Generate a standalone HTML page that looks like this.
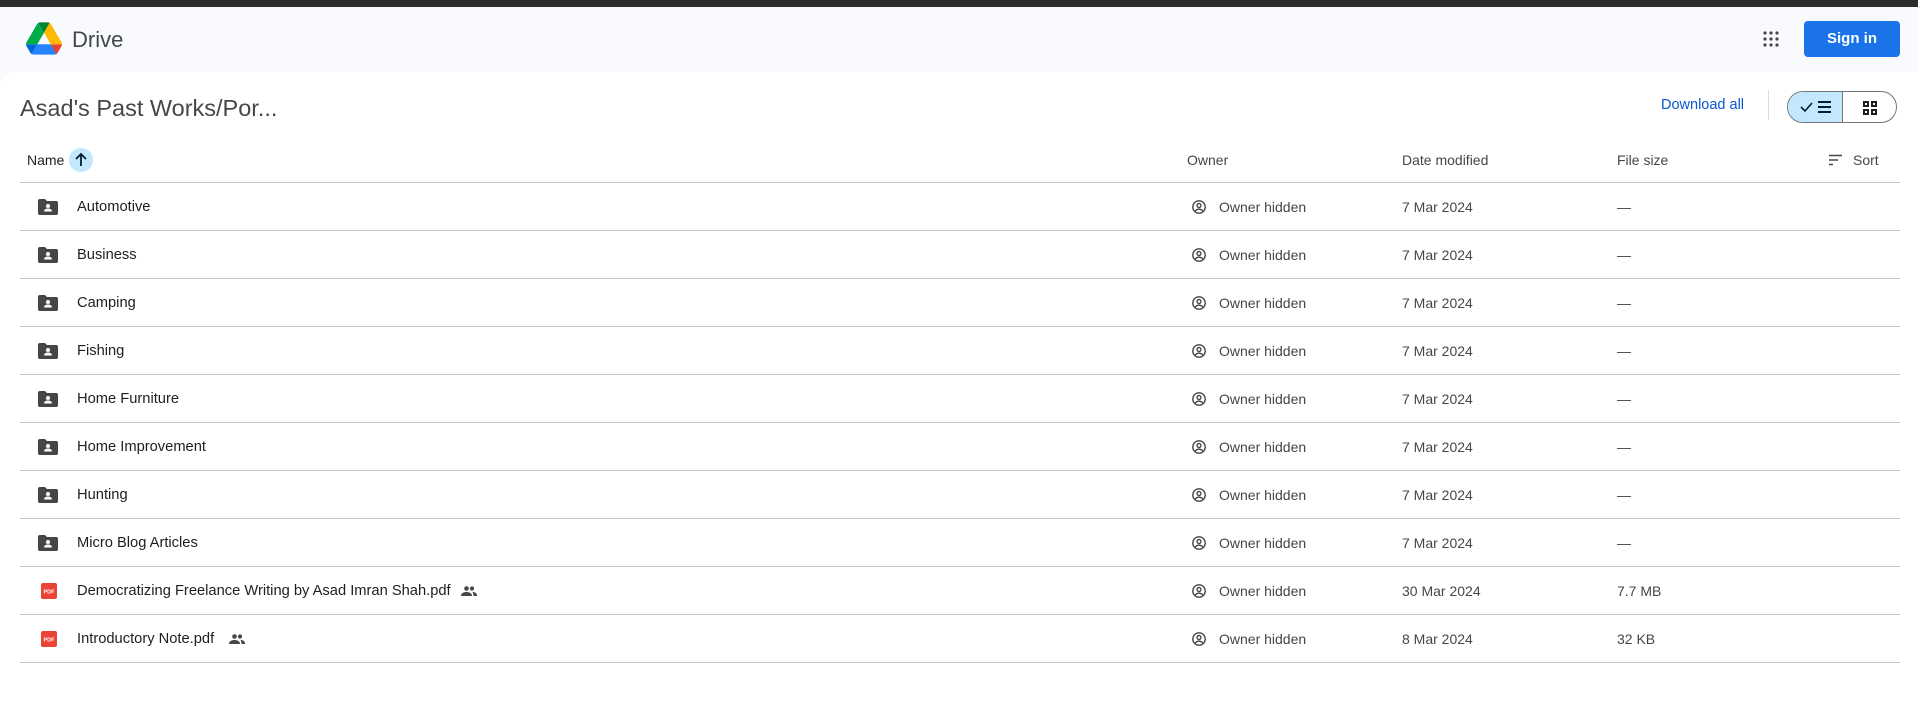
<!DOCTYPE html>
<html><head><meta charset="utf-8"><style>
*{margin:0;padding:0;box-sizing:border-box}
body{width:1918px;height:701px;overflow:hidden;background:#f8fafd;font-family:"Liberation Sans",Arial,sans-serif;color:#1f1f1f;position:relative}
.abs{position:absolute}
.top{left:0;top:0;width:1918px;height:7px;background:#2d2d2d}
.card{left:0;top:72px;width:1918px;height:629px;background:#fff;border-top-left-radius:16px}
.row{position:absolute;left:20px;width:1880px;height:48px;border-bottom:1px solid #c7c7c7;font-size:14px}
.row span{position:absolute;top:50%;transform:translateY(-50%);white-space:nowrap}
.n{left:57px;color:#1f1f1f;font-size:14.7px}
.o{left:1199px;color:#444746}
.d{left:1382px;color:#444746}
.s{left:1597px;color:#444746}
.oi{left:1172px}
.fi{left:18px}
</style></head><body>
<div class="abs top"></div>
<svg class="abs" style="left:26px;top:22px" width="36" height="33" viewBox="0 0 87.3 78"><path d="m6.6 66.85 3.85 6.65c.8 1.4 1.95 2.5 3.3 3.3l13.750-23.8h-27.5c0 1.55.4 3.1 1.2 4.5z" fill="#0066da"/><path d="m43.65 25-13.75-23.8c-1.35.8-2.5 1.9-3.3 3.3l-25.4 44a9.06 9.06 0 0 0 -1.2 4.5h27.5z" fill="#00ac47"/><path d="m73.55 76.8c1.35-.8 2.5-1.9 3.3-3.3l1.6-2.750 7.65-13.25c.8-1.4 1.2-2.95 1.2-4.5h-27.502l5.852 11.5z" fill="#ea4335"/><path d="m43.65 25 13.75-23.8c-1.35-.8-2.9-1.2-4.5-1.2h-18.5c-1.6 0-3.15.45-4.5 1.2z" fill="#00832d"/><path d="m59.8 53h-32.3l-13.75 23.8c1.35.8 2.9 1.2 4.5 1.2h50.8c1.6 0 3.15-.45 4.5-1.2z" fill="#2684fc"/><path d="m73.4 26.5-12.7-22c-.8-1.4-1.95-2.5-3.3-3.3l-13.75 23.8 16.15 28h27.45c0-1.55-.4-3.1-1.2-4.5z" fill="#ffba00"/></svg>
<div class="abs" style="left:72px;top:27px;font-size:22px;color:#444746">Drive</div>
<svg class="abs" style="left:1763px;top:31px" width="16" height="16" viewBox="0 0 16 16" fill="#444746"><circle cx="2" cy="2" r="1.6"/><circle cx="8" cy="2" r="1.6"/><circle cx="14" cy="2" r="1.6"/><circle cx="2" cy="8" r="1.6"/><circle cx="8" cy="8" r="1.6"/><circle cx="14" cy="8" r="1.6"/><circle cx="2" cy="14" r="1.6"/><circle cx="8" cy="14" r="1.6"/><circle cx="14" cy="14" r="1.6"/></svg>
<div class="abs" style="left:1804px;top:21px;width:96px;height:36px;background:#1a73e8;border-radius:4px;color:#fff;font-size:15px;font-weight:bold;text-align:center;line-height:36px">Sign in</div>
<div class="abs card"></div>
<div class="abs" style="left:20px;top:95px;font-size:23.5px;color:#444746">Asad's Past Works/Por...</div>
<div class="abs" style="left:1661px;top:97px;font-size:14.5px;color:#0b57d0">Download all</div>
<div class="abs" style="left:1768px;top:90px;width:1px;height:30px;background:#dadce0"></div>
<div class="abs" style="left:1787px;top:91px;width:110px;height:32px;border:1px solid #747775;border-radius:16px;overflow:hidden">
<div style="position:absolute;left:0;top:0;width:55px;height:30px;background:#c2e7ff;border-right:1px solid #747775"></div>
<svg style="position:absolute;left:12px;top:8px" width="34" height="14" viewBox="0 0 34 14"><path d="M1 7l4 4 7-8" stroke="#001d35" stroke-width="1.6" fill="none"/><path d="M18 2h13M18 7h13M18 12h13" stroke="#001d35" stroke-width="2"/></svg>
<svg style="position:absolute;left:75px;top:9px" width="14" height="14" viewBox="0 0 14 14" fill="none" stroke="#1f1f1f" stroke-width="2"><rect x="1" y="1" width="4" height="4"/><rect x="9" y="1" width="4" height="4"/><rect x="1" y="9" width="4" height="4"/><rect x="9" y="9" width="4" height="4"/></svg>
</div>
<div class="abs" style="left:27px;top:152px;font-size:14px;color:#1f1f1f">Name</div>
<div class="abs" style="left:69px;top:148px;width:24px;height:24px;border-radius:50%;background:#c2e7ff"></div>
<svg class="abs" style="left:73px;top:152px" width="16" height="16" viewBox="0 0 16 16"><path d="M8 14V2M3 7l5-5 5 5" stroke="#001d35" stroke-width="1.8" fill="none"/></svg>
<div class="abs" style="left:1187px;top:152px;font-size:14px;color:#444746">Owner</div>
<div class="abs" style="left:1402px;top:152px;font-size:14px;color:#444746">Date modified</div>
<div class="abs" style="left:1617px;top:152px;font-size:14px;color:#444746">File size</div>
<svg class="abs" style="left:1829px;top:154px" width="14" height="12" viewBox="0 0 14 12"><path d="M0 1.5h13M0 6h9M0 10.5h4" stroke="#444746" stroke-width="1.5"/></svg>
<div class="abs" style="left:1853px;top:152px;font-size:14px;color:#444746">Sort</div>
<div class="abs" style="left:20px;top:182px;width:1880px;height:1px;background:#c7c7c7"></div>
<div style="position:absolute;left:0;top:183px">
<div class="row" style="top:0"><svg class="abs fi" style="top:16px" width="20" height="16" viewBox="0 0 20 16"><path d="M0 2a2 2 0 0 1 2-2h5l2 2h9a2 2 0 0 1 2 2v10a2 2 0 0 1-2 2H2a2 2 0 0 1-2-2z" fill="#444746"/><circle cx="10" cy="7" r="2" fill="#fff"/><path d="M6 12.5c0-2 2-3 4-3s4 1 4 3z" fill="#fff"/></svg><span class="n">Automotive</span><svg class="abs oi" style="top:17px" width="14" height="14" viewBox="0 0 14 14" fill="none" stroke="#444746" stroke-width="1.4"><circle cx="7" cy="7" r="6.2"/><circle cx="7" cy="5.5" r="2"/><path d="M3.2 11c1-1.3 2.3-1.8 3.8-1.8s2.8.5 3.8 1.8"/></svg><span class="o">Owner hidden</span><span class="d">7 Mar 2024</span><span class="s">—</span></div>
<div class="row" style="top:48px"><svg class="abs fi" style="top:16px" width="20" height="16" viewBox="0 0 20 16"><path d="M0 2a2 2 0 0 1 2-2h5l2 2h9a2 2 0 0 1 2 2v10a2 2 0 0 1-2 2H2a2 2 0 0 1-2-2z" fill="#444746"/><circle cx="10" cy="7" r="2" fill="#fff"/><path d="M6 12.5c0-2 2-3 4-3s4 1 4 3z" fill="#fff"/></svg><span class="n">Business</span><svg class="abs oi" style="top:17px" width="14" height="14" viewBox="0 0 14 14" fill="none" stroke="#444746" stroke-width="1.4"><circle cx="7" cy="7" r="6.2"/><circle cx="7" cy="5.5" r="2"/><path d="M3.2 11c1-1.3 2.3-1.8 3.8-1.8s2.8.5 3.8 1.8"/></svg><span class="o">Owner hidden</span><span class="d">7 Mar 2024</span><span class="s">—</span></div>
<div class="row" style="top:96px"><svg class="abs fi" style="top:16px" width="20" height="16" viewBox="0 0 20 16"><path d="M0 2a2 2 0 0 1 2-2h5l2 2h9a2 2 0 0 1 2 2v10a2 2 0 0 1-2 2H2a2 2 0 0 1-2-2z" fill="#444746"/><circle cx="10" cy="7" r="2" fill="#fff"/><path d="M6 12.5c0-2 2-3 4-3s4 1 4 3z" fill="#fff"/></svg><span class="n">Camping</span><svg class="abs oi" style="top:17px" width="14" height="14" viewBox="0 0 14 14" fill="none" stroke="#444746" stroke-width="1.4"><circle cx="7" cy="7" r="6.2"/><circle cx="7" cy="5.5" r="2"/><path d="M3.2 11c1-1.3 2.3-1.8 3.8-1.8s2.8.5 3.8 1.8"/></svg><span class="o">Owner hidden</span><span class="d">7 Mar 2024</span><span class="s">—</span></div>
<div class="row" style="top:144px"><svg class="abs fi" style="top:16px" width="20" height="16" viewBox="0 0 20 16"><path d="M0 2a2 2 0 0 1 2-2h5l2 2h9a2 2 0 0 1 2 2v10a2 2 0 0 1-2 2H2a2 2 0 0 1-2-2z" fill="#444746"/><circle cx="10" cy="7" r="2" fill="#fff"/><path d="M6 12.5c0-2 2-3 4-3s4 1 4 3z" fill="#fff"/></svg><span class="n">Fishing</span><svg class="abs oi" style="top:17px" width="14" height="14" viewBox="0 0 14 14" fill="none" stroke="#444746" stroke-width="1.4"><circle cx="7" cy="7" r="6.2"/><circle cx="7" cy="5.5" r="2"/><path d="M3.2 11c1-1.3 2.3-1.8 3.8-1.8s2.8.5 3.8 1.8"/></svg><span class="o">Owner hidden</span><span class="d">7 Mar 2024</span><span class="s">—</span></div>
<div class="row" style="top:192px"><svg class="abs fi" style="top:16px" width="20" height="16" viewBox="0 0 20 16"><path d="M0 2a2 2 0 0 1 2-2h5l2 2h9a2 2 0 0 1 2 2v10a2 2 0 0 1-2 2H2a2 2 0 0 1-2-2z" fill="#444746"/><circle cx="10" cy="7" r="2" fill="#fff"/><path d="M6 12.5c0-2 2-3 4-3s4 1 4 3z" fill="#fff"/></svg><span class="n">Home Furniture</span><svg class="abs oi" style="top:17px" width="14" height="14" viewBox="0 0 14 14" fill="none" stroke="#444746" stroke-width="1.4"><circle cx="7" cy="7" r="6.2"/><circle cx="7" cy="5.5" r="2"/><path d="M3.2 11c1-1.3 2.3-1.8 3.8-1.8s2.8.5 3.8 1.8"/></svg><span class="o">Owner hidden</span><span class="d">7 Mar 2024</span><span class="s">—</span></div>
<div class="row" style="top:240px"><svg class="abs fi" style="top:16px" width="20" height="16" viewBox="0 0 20 16"><path d="M0 2a2 2 0 0 1 2-2h5l2 2h9a2 2 0 0 1 2 2v10a2 2 0 0 1-2 2H2a2 2 0 0 1-2-2z" fill="#444746"/><circle cx="10" cy="7" r="2" fill="#fff"/><path d="M6 12.5c0-2 2-3 4-3s4 1 4 3z" fill="#fff"/></svg><span class="n">Home Improvement</span><svg class="abs oi" style="top:17px" width="14" height="14" viewBox="0 0 14 14" fill="none" stroke="#444746" stroke-width="1.4"><circle cx="7" cy="7" r="6.2"/><circle cx="7" cy="5.5" r="2"/><path d="M3.2 11c1-1.3 2.3-1.8 3.8-1.8s2.8.5 3.8 1.8"/></svg><span class="o">Owner hidden</span><span class="d">7 Mar 2024</span><span class="s">—</span></div>
<div class="row" style="top:288px"><svg class="abs fi" style="top:16px" width="20" height="16" viewBox="0 0 20 16"><path d="M0 2a2 2 0 0 1 2-2h5l2 2h9a2 2 0 0 1 2 2v10a2 2 0 0 1-2 2H2a2 2 0 0 1-2-2z" fill="#444746"/><circle cx="10" cy="7" r="2" fill="#fff"/><path d="M6 12.5c0-2 2-3 4-3s4 1 4 3z" fill="#fff"/></svg><span class="n">Hunting</span><svg class="abs oi" style="top:17px" width="14" height="14" viewBox="0 0 14 14" fill="none" stroke="#444746" stroke-width="1.4"><circle cx="7" cy="7" r="6.2"/><circle cx="7" cy="5.5" r="2"/><path d="M3.2 11c1-1.3 2.3-1.8 3.8-1.8s2.8.5 3.8 1.8"/></svg><span class="o">Owner hidden</span><span class="d">7 Mar 2024</span><span class="s">—</span></div>
<div class="row" style="top:336px"><svg class="abs fi" style="top:16px" width="20" height="16" viewBox="0 0 20 16"><path d="M0 2a2 2 0 0 1 2-2h5l2 2h9a2 2 0 0 1 2 2v10a2 2 0 0 1-2 2H2a2 2 0 0 1-2-2z" fill="#444746"/><circle cx="10" cy="7" r="2" fill="#fff"/><path d="M6 12.5c0-2 2-3 4-3s4 1 4 3z" fill="#fff"/></svg><span class="n">Micro Blog Articles</span><svg class="abs oi" style="top:17px" width="14" height="14" viewBox="0 0 14 14" fill="none" stroke="#444746" stroke-width="1.4"><circle cx="7" cy="7" r="6.2"/><circle cx="7" cy="5.5" r="2"/><path d="M3.2 11c1-1.3 2.3-1.8 3.8-1.8s2.8.5 3.8 1.8"/></svg><span class="o">Owner hidden</span><span class="d">7 Mar 2024</span><span class="s">—</span></div>
<div class="row" style="top:384px"><svg class="abs" style="left:21px;top:16px" width="16" height="16" viewBox="0 0 16 16"><rect width="16" height="16" rx="2" fill="#ea4335"/><text x="8" y="10.5" font-size="5.5" font-weight="bold" fill="#fff" text-anchor="middle" font-family="Liberation Sans">PDF</text></svg><span class="n">Democratizing Freelance Writing by Asad Imran Shah.pdf</span><svg class="abs" style="left:441px;top:19px" width="16" height="10" viewBox="0 0 16 10" fill="#444746"><circle cx="5.5" cy="2.5" r="2.3"/><circle cx="11" cy="2.5" r="2.1"/><path d="M0 10c0-3 3-4 5.5-4s5.5 1 5.5 4z"/><path d="M11.5 6c2.5 0 4.5 1 4.5 4h-3.5c0-2-0.5-3-1-4z"/></svg><svg class="abs oi" style="top:17px" width="14" height="14" viewBox="0 0 14 14" fill="none" stroke="#444746" stroke-width="1.4"><circle cx="7" cy="7" r="6.2"/><circle cx="7" cy="5.5" r="2"/><path d="M3.2 11c1-1.3 2.3-1.8 3.8-1.8s2.8.5 3.8 1.8"/></svg><span class="o">Owner hidden</span><span class="d">30 Mar 2024</span><span class="s">7.7 MB</span></div>
<div class="row" style="top:432px"><svg class="abs" style="left:21px;top:16px" width="16" height="16" viewBox="0 0 16 16"><rect width="16" height="16" rx="2" fill="#ea4335"/><text x="8" y="10.5" font-size="5.5" font-weight="bold" fill="#fff" text-anchor="middle" font-family="Liberation Sans">PDF</text></svg><span class="n">Introductory Note.pdf</span><svg class="abs" style="left:209px;top:19px" width="16" height="10" viewBox="0 0 16 10" fill="#444746"><circle cx="5.5" cy="2.5" r="2.3"/><circle cx="11" cy="2.5" r="2.1"/><path d="M0 10c0-3 3-4 5.5-4s5.5 1 5.5 4z"/><path d="M11.5 6c2.5 0 4.5 1 4.5 4h-3.5c0-2-0.5-3-1-4z"/></svg><svg class="abs oi" style="top:17px" width="14" height="14" viewBox="0 0 14 14" fill="none" stroke="#444746" stroke-width="1.4"><circle cx="7" cy="7" r="6.2"/><circle cx="7" cy="5.5" r="2"/><path d="M3.2 11c1-1.3 2.3-1.8 3.8-1.8s2.8.5 3.8 1.8"/></svg><span class="o">Owner hidden</span><span class="d">8 Mar 2024</span><span class="s">32 KB</span></div>
</div>
</body></html>
